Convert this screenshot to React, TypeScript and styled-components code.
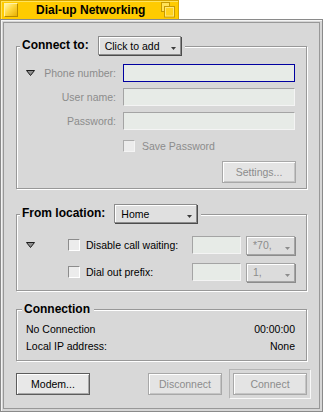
import React from "react";
import styled, { createGlobalStyle } from "styled-components";

const GlobalStyle = createGlobalStyle`
    html, body {
        margin: 0;
        padding: 0;
        background-color: #ffffff;
    }
    body {
        font-family: "Liberation Sans", Arial, sans-serif;
    }
`;

const Screen = styled.div`
    width: 323px;
    height: 412px;
    display: flex;
    flex-direction: column;
    background-color: #ffffff;
`;

const Tab = styled.div`
    width: 179px;
    height: 19px;
    box-sizing: border-box;
    background-color: #ffcb00;
    border: 1px solid #d9a800;
    border-bottom: none;
    box-shadow: inset 1px 1px 0 #ffe35a;
    display: flex;
    align-items: center;
    padding: 0 2px 0 3px;
`;

const CloseBox = styled.div`
    width: 14px;
    height: 14px;
    box-sizing: border-box;
    border: 1px solid;
    border-color: #fff2a8 #b88a00 #b88a00 #fff2a8;
    background: linear-gradient(135deg, #fff4b0 0%, #ffd940 45%, #e8b000 100%);
`;

const Title = styled.div`
    margin-left: 18px;
    font-size: 12px;
    font-weight: bold;
    color: #000000;
    flex: 1;
`;

const Window = styled.div`
    flex: 1;
    display: flex;
    box-sizing: border-box;
    border: 1px solid #8a8a8a;
    padding: 2px;
    background-color: #d6d6d6;
    box-shadow: inset 1px 1px 0 #f4f4f4;
`;

const Panel = styled.div`
    flex: 1;
    display: flex;
    flex-direction: column;
    border: 1px solid #989898;
    background-color: #d8d8d8;
    padding: 0 8px 8px 12px;
`;

const Box = styled.div<{ $top: number; $bottom: number }>`
    margin: ${(p) => p.$top}px 4px 0 0;
    border: 1px solid #989898;
    box-shadow: inset 1px 1px 0 #ffffff, 1px 1px 0 #ffffff;
    padding-bottom: ${(p) => p.$bottom}px;
`;

const Legend = styled.div<{ $lift: number; $indent: number; $height: number }>`
    width: fit-content;
    height: ${(p) => p.$height}px;
    display: flex;
    align-items: flex-start;
    gap: 9px;
    margin: -${(p) => p.$lift}px 0 0 ${(p) => p.$indent}px;
    padding: 0 4px 0 2px;
    background-color: #d8d8d8;
`;

const LegendText = styled.span<{ $line: number }>`
    font-size: 12px;
    font-weight: bold;
    color: #000000;
    line-height: ${(p) => p.$line}px;
    white-space: nowrap;
`;

const Menu = styled.div<{ $width: number; $disabled?: boolean }>`
    width: ${(p) => p.$width}px;
    height: 19px;
    box-sizing: border-box;
    display: flex;
    align-items: center;
    padding: 0 4px 0 6px;
    border: 1px solid ${(p) => (p.$disabled ? "#a4a4a4" : "#8c8c8c")};
    background-color: ${(p) => (p.$disabled ? "#dcdcdc" : "#e0e0e0")};
    box-shadow: inset 1px 1px 0 #ffffff, 1px 1px 0 ${(p) => (p.$disabled ? "#8c8c8c" : "#4c4c4c")};
    font-size: 10.5px;
    color: ${(p) => (p.$disabled ? "#8c8c8c" : "#000000")};
    white-space: nowrap;
`;

const MenuLabel = styled.span`
    flex: 1;
`;

const MenuArrow = styled.svg`
    align-self: flex-end;
    margin-bottom: 4px;
`;

const FieldGrid = styled.div`
    display: grid;
    grid-template-columns: 99px 172px;
    grid-auto-rows: 18px;
    column-gap: 7px;
    row-gap: 6px;
    margin-top: 8px;
`;

const LabelCell = styled.div`
    display: flex;
    align-items: center;
`;

const FieldLabel = styled.span<{ $disabled?: boolean }>`
    margin-left: auto;
    font-size: 10.5px;
    color: ${(p) => (p.$disabled ? "#8c8c8c" : "#000000")};
    white-space: nowrap;
`;

const TextInput = styled.div<{ $focused?: boolean; $width?: number }>`
    width: ${(p) => (p.$width ? `${p.$width}px` : "100%")};
    height: 18px;
    box-sizing: border-box;
    background-color: #e7ebe7;
    border: 1px solid;
    border-color: ${(p) => (p.$focused ? "#0000a0" : "#a4a4a4 #f4f4f4 #f4f4f4 #a4a4a4")};
`;

const CheckRow = styled.div`
    display: flex;
    align-items: center;
    gap: 7px;
    margin: 10px 0 0 106px;
    height: 12px;
`;

const CheckBox = styled.div<{ $disabled?: boolean }>`
    width: 12px;
    height: 12px;
    box-sizing: border-box;
    background-color: #ececec;
    border: 1px solid;
    border-color: ${(p) => (p.$disabled ? "#acacac #f4f4f4 #f4f4f4 #acacac" : "#8c8c8c #ffffff #ffffff #8c8c8c")};
`;

const ButtonRow = styled.div<{ $top: number }>`
    display: flex;
    justify-content: flex-end;
    margin-top: ${(p) => p.$top}px;
    padding-right: 10px;
`;

const Button = styled.div<{ $disabled?: boolean }>`
    width: 74px;
    height: 22px;
    box-sizing: border-box;
    display: flex;
    align-items: center;
    justify-content: center;
    border: 1px solid ${(p) => (p.$disabled ? "#a8a8a8" : "#5c5c5c")};
    background-color: ${(p) => (p.$disabled ? "#e4e4e4" : "#e8e8e8")};
    box-shadow: inset 1px 1px 0 #ffffff, inset -1px -1px 0 ${(p) => (p.$disabled ? "#c4c4c4" : "#a8a8a8")};
    font-size: 10.5px;
    color: ${(p) => (p.$disabled ? "#8c8c8c" : "#000000")};
    white-space: nowrap;
`;

const DefaultFrame = styled.div`
    width: 82px;
    height: 30px;
    box-sizing: border-box;
    padding: 3px;
    border: 1px solid;
    border-color: #b4b4b4 #f8f8f8 #f8f8f8 #b4b4b4;
    margin-left: 7px;
`;

const LocationRow = styled.div<{ $top: number }>`
    display: grid;
    grid-template-columns: 51px 18px 106px 54px 50px;
    align-items: center;
    height: 20px;
    margin-top: ${(p) => p.$top}px;
`;

const Expander = styled.svg`
    margin-left: 9px;
    flex-shrink: 0;
`;

const StatusRow = styled.div<{ $top: number }>`
    display: flex;
    justify-content: space-between;
    align-items: center;
    height: 14px;
    margin-top: ${(p) => p.$top}px;
    padding: 0 11px 0 9px;
    font-size: 10.5px;
    color: #000000;
`;

const BottomBar = styled.div`
    display: flex;
    align-items: center;
    height: 30px;
    margin-top: 8px;
`;

const Spacer = styled.div`
    flex: 1;
`;

const Triangle = () => (
    <Expander width="9" height="6" viewBox="0 0 9 6">
        <polygon points="0.5,0.5 8.5,0.5 4.5,5.5" fill="#8e8e8e" stroke="#1c1c1c" strokeWidth="1" />
    </Expander>
);

const Arrow = ({ disabled }: { disabled?: boolean }) => (
    <MenuArrow width="5" height="3" viewBox="0 0 5 3">
        <polygon points="0,0 5,0 2.5,3" fill={disabled ? "#8c8c8c" : "#3c3c3c"} />
    </MenuArrow>
);

const ZoomBox = () => (
    <svg width="15" height="16" viewBox="0 0 15 16">
        <rect x="0.5" y="0.5" width="8" height="9" fill="#ffe258" stroke="#c89a00" />
        <rect x="3.5" y="4.5" width="10" height="10.5" fill="#ffd21e" stroke="#c89a00" />
        <rect x="4.5" y="5.5" width="8" height="8.5" fill="none" stroke="#fff0a0" strokeWidth="1" opacity="0.7" />
    </svg>
);

const App = () => {
    return (
        <>
            <GlobalStyle />
            <Screen>
                <Tab>
                    <CloseBox />
                    <Title>Dial-up Networking</Title>
                    <ZoomBox />
                </Tab>
                <Window>
                    <Panel>
                        <Box $top={23} $bottom={5}>
                            <Legend $lift={11} $indent={3} $height={20}>
                                <LegendText $line={19}>Connect to:</LegendText>
                                <Menu $width={83}>
                                    <MenuLabel>Click to add</MenuLabel>
                                    <Arrow />
                                </Menu>
                            </Legend>
                            <FieldGrid>
                                <LabelCell>
                                    <Triangle />
                                    <FieldLabel $disabled>Phone number:</FieldLabel>
                                </LabelCell>
                                <TextInput $focused />
                                <LabelCell>
                                    <FieldLabel $disabled>User name:</FieldLabel>
                                </LabelCell>
                                <TextInput />
                                <LabelCell>
                                    <FieldLabel $disabled>Password:</FieldLabel>
                                </LabelCell>
                                <TextInput />
                            </FieldGrid>
                            <CheckRow>
                                <CheckBox $disabled />
                                <FieldLabel $disabled style={{ marginLeft: 0 }}>Save Password</FieldLabel>
                            </CheckRow>
                            <ButtonRow $top={9}>
                                <Button $disabled>Settings...</Button>
                            </ButtonRow>
                        </Box>

                        <Box $top={25} $bottom={8}>
                            <Legend $lift={11} $indent={3} $height={20}>
                                <LegendText $line={19}>From location:</LegendText>
                                <Menu $width={83}>
                                    <MenuLabel>Home</MenuLabel>
                                    <Arrow />
                                </Menu>
                            </Legend>
                            <LocationRow $top={11}>
                                <LabelCell>
                                    <Triangle />
                                </LabelCell>
                                <CheckBox />
                                <FieldLabel style={{ marginLeft: 0 }}>Disable call waiting:</FieldLabel>
                                <TextInput $width={49} />
                                <Menu $width={49} $disabled>
                                    <MenuLabel>*70,</MenuLabel>
                                    <Arrow disabled />
                                </Menu>
                            </LocationRow>
                            <LocationRow $top={7}>
                                <span />
                                <CheckBox />
                                <FieldLabel style={{ marginLeft: 0 }}>Dial out prefix:</FieldLabel>
                                <TextInput $width={49} />
                                <Menu $width={49} $disabled>
                                    <MenuLabel>1,</MenuLabel>
                                    <Arrow disabled />
                                </Menu>
                            </LocationRow>
                        </Box>

                        <Box $top={18} $bottom={7}>
                            <Legend $lift={8} $indent={5} $height={14}>
                                <LegendText $line={14}>Connection</LegendText>
                            </Legend>
                            <StatusRow $top={6}>
                                <span>No Connection</span>
                                <span>00:00:00</span>
                            </StatusRow>
                            <StatusRow $top={3}>
                                <span>Local IP address:</span>
                                <span>None</span>
                            </StatusRow>
                        </Box>

                        <BottomBar>
                            <Button>Modem...</Button>
                            <Spacer />
                            <Button $disabled>Disconnect</Button>
                            <DefaultFrame>
                                <Button $disabled>Connect</Button>
                            </DefaultFrame>
                        </BottomBar>
                    </Panel>
                </Window>
            </Screen>
        </>
    );
};

export default App;
